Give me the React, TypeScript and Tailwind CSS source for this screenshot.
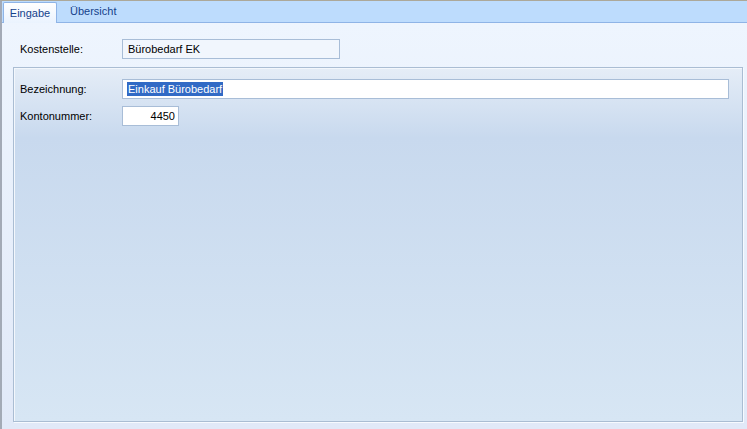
export default function App() {
  return (
    <div
      className="w-[747px] h-[429px] flex flex-col border-t border-[#aca899] border-l-2 border-l-[#a3aab6] text-[11px] text-black overflow-hidden"
      style={{ fontFamily: '"Liberation Sans", Arial, sans-serif' }}
    >
      {/* tab strip */}
      <div className="h-[22px] shrink-0 flex items-end pl-[1px] bg-[#bddcfd] border-b border-[#8fb4e6]">
        <div className="h-[21px] w-[54px] -mb-px flex items-center justify-center rounded-t-[2px] border border-b-0 border-[#8fb4e6] bg-gradient-to-b from-[#ffffff] to-[#eaf3fe] text-[#15428b]">
          Eingabe
        </div>
        <div className="h-[21px] flex items-center pl-[13px] text-[#15428b]">
          Übersicht
        </div>
      </div>

      {/* body */}
      <div className="flex-1 flex flex-col pl-[11px] pr-[4px] pb-[7px] bg-gradient-to-b from-[#eef5fe] to-[#e1e9f8]">
        <div className="flex items-center h-[20px] mt-[16px]">
          <div className="w-[109px] pl-[7px]">Kostenstelle:</div>
          <div className="w-[218px] h-[20px] flex items-center pl-[5px] border border-[#a8bdd7] bg-[#f1f6fd]">
            Bürobedarf EK
          </div>
        </div>

        <div className="flex-1 mt-[8px] border border-[#aabdd3] shadow-[inset_1px_1px_0_#f3f7fc,1px_1px_0_#f7faff] bg-[linear-gradient(to_bottom,#e5edf7_0px,#c8d9ee_70px,#d7e6f4_100%)] flex flex-col pt-[11px] pl-[6px] pr-[13px] gap-[7px]">
          <div className="flex items-center h-[20px]">
            <div className="w-[102px]">Bezeichnung:</div>
            <div className="flex-1 h-[20px] flex items-center pl-[4px] border border-[#a8bdd7] bg-white">
              <span className="bg-[#316ac5] text-white leading-[14px] px-[1px]">Einkauf Bürobedarf</span>
            </div>
          </div>
          <div className="flex items-center h-[20px]">
            <div className="w-[102px]">Kontonummer:</div>
            <div className="w-[57px] h-[20px] flex items-center justify-end pr-[3px] border border-[#a8bdd7] bg-white">
              4450
            </div>
          </div>
        </div>
      </div>
    </div>
  )
}
